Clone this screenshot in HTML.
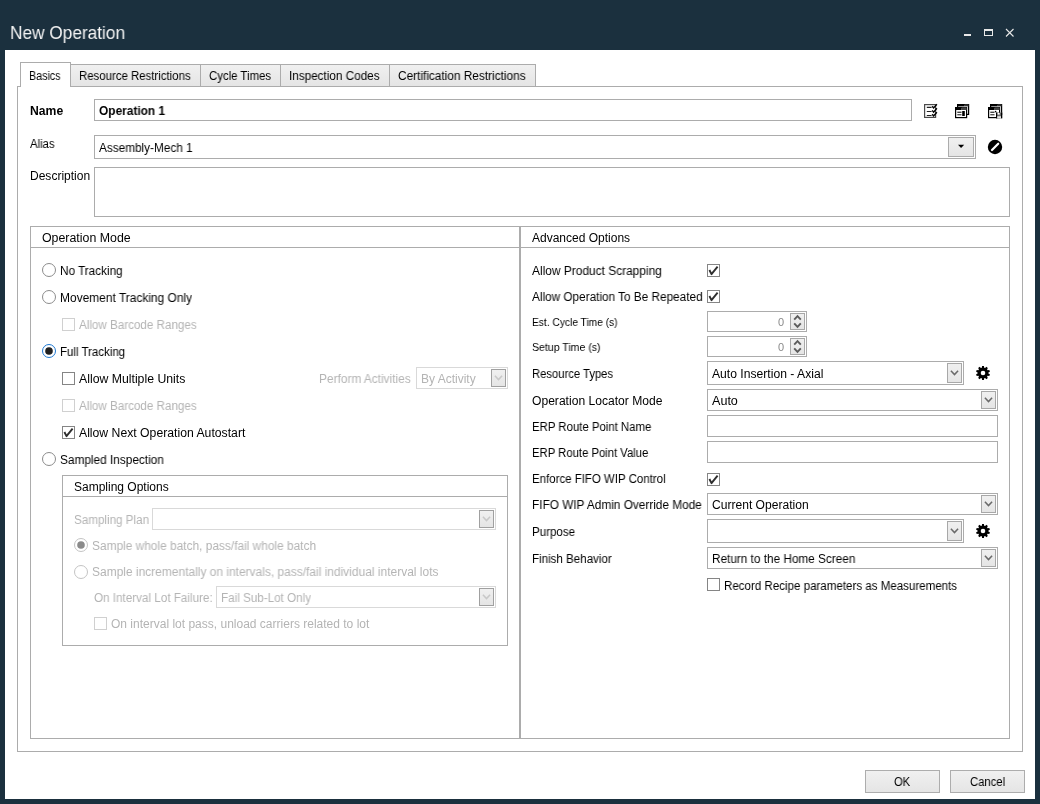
<!DOCTYPE html>
<html><head><meta charset="utf-8"><style>
html,body{margin:0;padding:0;width:1040px;height:804px;overflow:hidden;background:#1b303e;}
.t{position:absolute;white-space:nowrap;line-height:20px;transform-origin:0 0;will-change:transform;font-family:"Liberation Sans",sans-serif;}
.b{position:absolute;}
svg.b{overflow:visible}
</style></head><body>
<div class="t" style="left:10.20px;top:23px;font-size:19px;color:#f4f4f4;transform:scaleX(0.9081);">New Operation</div>
<svg class="b" style="left:960px;top:25px" width="60" height="16" viewBox="960 25 60 16"><rect x="964" y="34" width="7" height="2" fill="#e8e8e8"/><rect x="984.5" y="29.5" width="8" height="6" fill="none" stroke="#e8e8e8" stroke-width="1"/><rect x="984" y="29" width="9" height="2" fill="#e8e8e8"/><path d="M1006 29 L1013.5 36.5 M1013.5 29 L1006 36.5" stroke="#e8e8e8" stroke-width="1.1"/></svg>
<div class="b" style="left:5px;top:50px;width:1030px;height:749px;background:#fff"></div>
<div class="b" style="left:17px;top:86px;width:1006px;height:666px;border:1px solid #acacac;box-sizing:border-box"></div>
<div class="b" style="left:70px;top:64px;width:131px;height:23px;border:1px solid #acacac;box-sizing:border-box;background:linear-gradient(#f0f0f0,#e5e5e5)"></div>
<div class="b" style="left:200px;top:64px;width:81px;height:23px;border:1px solid #acacac;box-sizing:border-box;background:linear-gradient(#f0f0f0,#e5e5e5)"></div>
<div class="b" style="left:280px;top:64px;width:110px;height:23px;border:1px solid #acacac;box-sizing:border-box;background:linear-gradient(#f0f0f0,#e5e5e5)"></div>
<div class="b" style="left:389px;top:64px;width:147px;height:23px;border:1px solid #acacac;box-sizing:border-box;background:linear-gradient(#f0f0f0,#e5e5e5)"></div>
<div class="b" style="left:20px;top:62px;width:51px;height:25px;border:1px solid #acacac;border-bottom:none;box-sizing:border-box;background:#fff"></div>
<div class="t" style="left:29.25px;top:66px;font-size:12px;color:#000;transform:scaleX(0.8933);">Basics</div>
<div class="t" style="left:79.25px;top:66px;font-size:12px;color:#000;transform:scaleX(0.9508);">Resource Restrictions</div>
<div class="t" style="left:208.75px;top:66px;font-size:12px;color:#000;transform:scaleX(0.9499);">Cycle Times</div>
<div class="t" style="left:289.25px;top:66px;font-size:12px;color:#000;transform:scaleX(0.9768);">Inspection Codes</div>
<div class="t" style="left:397.75px;top:66px;font-size:12px;color:#000;transform:scaleX(0.9863);">Certification Restrictions</div>
<div class="t" style="left:30.25px;top:101px;font-size:12px;color:#000;font-weight:bold;transform:scaleX(1.0146);">Name</div>
<div class="b" style="left:94px;top:99px;width:818px;height:22px;border:1px solid #acacac;box-sizing:border-box"></div>
<div class="t" style="left:99.05px;top:101px;font-size:12px;color:#000;font-weight:bold;transform:scaleX(0.9906);">Operation 1</div>
<svg class="b" style="left:920px;top:100px" width="90" height="22" viewBox="920 100 90 22"><rect x="924.6" y="104.6" width="11" height="12.8" fill="#fff" stroke="#4a4a4a" stroke-width="1.2"/><path d="M926.8 107.4 H931.6 M926.8 111.5 H931.6 M926.8 115.5 H931.6" stroke="#222" stroke-width="1.1"/><path d="M932.2 106.3 L933.6 108 L936.9 104.2 M932.2 110.4 L933.6 112.1 L936.9 108.3 M932.2 114.3 L933.6 116 L936.9 112.2" stroke="#000" stroke-width="1.4" fill="none"/><rect x="957.6" y="104.6" width="11" height="9.8" fill="#fff" stroke="#000" stroke-width="1.2"/><rect x="957.6" y="104.2" width="7" height="2.2" fill="#000"/><rect x="964.6" y="104.2" width="4" height="2.2" fill="#333"/><rect x="955.6" y="107.6" width="11" height="10" fill="#fff" stroke="#000" stroke-width="1.2"/><rect x="955.6" y="107.4" width="6" height="2.6" fill="#000"/><rect x="961.6" y="107.4" width="5" height="2.6" fill="#444"/><rect x="957.3" y="111.6" width="4.2" height="1.4" fill="#444"/><rect x="957.3" y="114" width="4.2" height="1.4" fill="#555"/><rect x="962.2" y="111" width="2.6" height="5" fill="#000"/><rect x="990.6" y="104.6" width="11" height="9.8" fill="#fff" stroke="#000" stroke-width="1.2"/><rect x="990.6" y="104.2" width="7" height="2.2" fill="#000"/><rect x="997.6" y="104.2" width="4" height="2.2" fill="#333"/><rect x="988.6" y="107.6" width="11" height="10" fill="#fff" stroke="#000" stroke-width="1.2"/><rect x="988.6" y="107.4" width="6" height="2.6" fill="#000"/><rect x="994.6" y="107.4" width="5" height="2.6" fill="#444"/><rect x="990.3" y="111.6" width="4.2" height="1.4" fill="#444"/><rect x="990.3" y="114" width="4.2" height="1.4" fill="#555"/><rect x="996" y="112.5" width="6.2" height="5.8" fill="#6a6a6a"/><rect x="996" y="112.5" width="1.2" height="5.8" fill="#000"/><rect x="1001" y="112.5" width="1.2" height="5.8" fill="#000"/><rect x="997.6" y="113" width="2" height="1.6" fill="#fff"/><rect x="997.2" y="116.2" width="3.8" height="2" fill="#e0e0e0"/><circle cx="995.6" cy="111.6" r="0.8" fill="#000"/></svg>
<div class="t" style="left:29.75px;top:134px;font-size:12px;color:#000;transform:scaleX(0.9462);">Alias</div>
<div class="b" style="left:94px;top:135px;width:882px;height:24px;border:1px solid #acacac;box-sizing:border-box"></div>
<div class="b" style="left:948px;top:137px;width:26px;height:20px;border:1px solid #acacac;box-sizing:border-box;background:linear-gradient(#f0f0f0,#e5e5e5)"></div>
<svg class="b" style="left:955px;top:142px" width="12" height="8" viewBox="955 142 12 8"><path d="M958 144.8 H964.2 L961.1 147.9 Z" fill="#000"/></svg>
<div class="t" style="left:98.95px;top:138px;font-size:12px;color:#000;transform:scaleX(0.9814);">Assembly-Mech 1</div>
<svg class="b" style="left:985px;top:137px" width="20" height="20" viewBox="985 137 20 20"><circle cx="995" cy="147" r="7.2" fill="#000"/><path d="M992 150 L998.2 143.7" stroke="#fff" stroke-width="2.2" stroke-linecap="round"/></svg>
<div class="t" style="left:29.75px;top:166px;font-size:12px;color:#000;transform:scaleX(1.0017);">Description</div>
<div class="b" style="left:94px;top:167px;width:916px;height:50px;border:1px solid #acacac;box-sizing:border-box"></div>
<div class="b" style="left:30px;top:226px;width:490px;height:513px;border:1px solid #acacac;box-sizing:border-box"></div>
<div class="b" style="left:520px;top:226px;width:490px;height:513px;border:1px solid #acacac;box-sizing:border-box"></div>
<div class="b" style="left:30px;top:247px;width:980px;height:1px;background:#acacac"></div>
<div class="t" style="left:41.65px;top:228px;font-size:12px;color:#000;transform:scaleX(1.0302);">Operation Mode</div>
<div class="t" style="left:532.05px;top:228px;font-size:12px;color:#000;transform:scaleX(0.9997);">Advanced Options</div>
<svg class="b" style="left:42px;top:263px" width="14" height="14" viewBox="0 0 14 14"><circle cx="7" cy="7" r="6.5" fill="#fff" stroke="#8c8c8c" stroke-width="1"/></svg>
<div class="t" style="left:59.75px;top:261px;font-size:12px;color:#000;transform:scaleX(0.9781);">No Tracking</div>
<svg class="b" style="left:42px;top:290px" width="14" height="14" viewBox="0 0 14 14"><circle cx="7" cy="7" r="6.5" fill="#fff" stroke="#8c8c8c" stroke-width="1"/></svg>
<div class="t" style="left:59.75px;top:288px;font-size:12px;color:#000;transform:scaleX(0.9951);">Movement Tracking Only</div>
<svg class="b" style="left:62px;top:318px" width="13" height="13" viewBox="0 0 13 13"><rect x="0.5" y="0.5" width="12" height="12" fill="#fff" stroke="#d0d0d0" stroke-width="1"/></svg>
<div class="t" style="left:78.55px;top:315px;font-size:12px;color:#b4b4b4;transform:scaleX(0.9689);">Allow Barcode Ranges</div>
<svg class="b" style="left:42px;top:344px" width="14" height="14" viewBox="0 0 14 14"><circle cx="7" cy="7" r="6.5" fill="#fff" stroke="#1e78d2" stroke-width="1"/><circle cx="7" cy="7" r="3.8" fill="#212121"/></svg>
<div class="t" style="left:59.75px;top:342px;font-size:12px;color:#000;transform:scaleX(0.9574);">Full Tracking</div>
<svg class="b" style="left:62px;top:372px" width="13" height="13" viewBox="0 0 13 13"><rect x="0.5" y="0.5" width="12" height="12" fill="#fff" stroke="#858585" stroke-width="1"/></svg>
<div class="t" style="left:78.55px;top:369px;font-size:12px;color:#000;transform:scaleX(1.0221);">Allow Multiple Units</div>
<div class="t" style="left:318.75px;top:369px;font-size:12px;color:#b4b4b4;transform:scaleX(0.9898);">Perform Activities</div>
<div class="b" style="left:416px;top:367px;width:92px;height:22px;border:1px solid #d9d9d9;box-sizing:border-box;background:#fff"></div>
<div class="b" style="left:491px;top:369px;width:15px;height:18px;border:1px solid #a0a0a0;box-sizing:border-box;background:linear-gradient(#f0f0f0,#e5e5e5)"></div>
<svg class="b" style="left:491px;top:369px" width="15" height="18" viewBox="491 369 15 18"><path d="M494.9 375.8 L498.5 379.6 L502.1 375.8" stroke="#c8c8c8" stroke-width="1.5" fill="none"/></svg>
<div class="t" style="left:420.75px;top:369px;font-size:12px;color:#b4b4b4;transform:scaleX(0.9995);">By Activity</div>
<svg class="b" style="left:62px;top:399px" width="13" height="13" viewBox="0 0 13 13"><rect x="0.5" y="0.5" width="12" height="12" fill="#fff" stroke="#d0d0d0" stroke-width="1"/></svg>
<div class="t" style="left:78.55px;top:396px;font-size:12px;color:#b4b4b4;transform:scaleX(0.9689);">Allow Barcode Ranges</div>
<svg class="b" style="left:62px;top:426px" width="13" height="13" viewBox="0 0 13 13"><rect x="0.5" y="0.5" width="12" height="12" fill="#fff" stroke="#858585" stroke-width="1"/><path d="M2.4 6.0 L4.5 10.2 L10.6 2.7" stroke="#2e2e2e" stroke-width="1.9" fill="none" stroke-linejoin="round"/></svg>
<div class="t" style="left:78.55px;top:423px;font-size:12px;color:#000;transform:scaleX(1.0179);">Allow Next Operation Autostart</div>
<svg class="b" style="left:42px;top:452px" width="14" height="14" viewBox="0 0 14 14"><circle cx="7" cy="7" r="6.5" fill="#fff" stroke="#8c8c8c" stroke-width="1"/></svg>
<div class="t" style="left:59.75px;top:450px;font-size:12px;color:#000;transform:scaleX(0.9851);">Sampled Inspection</div>
<div class="b" style="left:62px;top:475px;width:446px;height:171px;border:1px solid #acacac;box-sizing:border-box"></div>
<div class="b" style="left:62px;top:496px;width:446px;height:1px;background:#acacac"></div>
<div class="t" style="left:73.55px;top:477px;font-size:12px;color:#000;transform:scaleX(0.9984);">Sampling Options</div>
<div class="t" style="left:73.55px;top:510px;font-size:12px;color:#b4b4b4;transform:scaleX(0.9706);">Sampling Plan</div>
<div class="b" style="left:152px;top:508px;width:344px;height:22px;border:1px solid #d9d9d9;box-sizing:border-box;background:#fff"></div>
<div class="b" style="left:479px;top:510px;width:15px;height:18px;border:1px solid #a0a0a0;box-sizing:border-box;background:linear-gradient(#f0f0f0,#e5e5e5)"></div>
<svg class="b" style="left:479px;top:510px" width="15" height="18" viewBox="479 510 15 18"><path d="M482.9 516.8 L486.5 520.6 L490.1 516.8" stroke="#c8c8c8" stroke-width="1.5" fill="none"/></svg>
<svg class="b" style="left:74px;top:538px" width="14" height="14" viewBox="0 0 14 14"><circle cx="7" cy="7" r="6.5" fill="#fff" stroke="#c4c4c4" stroke-width="1"/><circle cx="7" cy="7" r="3.8" fill="#8a8a8a"/></svg>
<div class="t" style="left:91.75px;top:536px;font-size:12px;color:#b4b4b4;transform:scaleX(0.9910);">Sample whole batch, pass/fail whole batch</div>
<svg class="b" style="left:74px;top:565px" width="14" height="14" viewBox="0 0 14 14"><circle cx="7" cy="7" r="6.5" fill="#fff" stroke="#c4c4c4" stroke-width="1"/></svg>
<div class="t" style="left:91.75px;top:562px;font-size:12px;color:#b4b4b4;transform:scaleX(0.9968);">Sample incrementally on intervals, pass/fail individual interval lots</div>
<div class="t" style="left:93.75px;top:588px;font-size:12px;color:#b4b4b4;transform:scaleX(0.9721);">On Interval Lot Failure:</div>
<div class="b" style="left:216px;top:586px;width:280px;height:22px;border:1px solid #d9d9d9;box-sizing:border-box;background:#fff"></div>
<div class="b" style="left:479px;top:588px;width:15px;height:18px;border:1px solid #a0a0a0;box-sizing:border-box;background:linear-gradient(#f0f0f0,#e5e5e5)"></div>
<svg class="b" style="left:479px;top:588px" width="15" height="18" viewBox="479 588 15 18"><path d="M482.9 594.8 L486.5 598.6 L490.1 594.8" stroke="#c8c8c8" stroke-width="1.5" fill="none"/></svg>
<div class="t" style="left:220.75px;top:588px;font-size:12px;color:#b4b4b4;transform:scaleX(0.9714);">Fail Sub-Lot Only</div>
<svg class="b" style="left:94px;top:617px" width="13" height="13" viewBox="0 0 13 13"><rect x="0.5" y="0.5" width="12" height="12" fill="#fff" stroke="#d0d0d0" stroke-width="1"/></svg>
<div class="t" style="left:110.55px;top:614px;font-size:12px;color:#b4b4b4;transform:scaleX(1.0007);">On interval lot pass, unload carriers related to lot</div>
<div class="t" style="left:531.75px;top:261px;font-size:12px;color:#000;transform:scaleX(0.9935);">Allow Product Scrapping</div>
<svg class="b" style="left:707px;top:264px" width="13" height="13" viewBox="0 0 13 13"><rect x="0.5" y="0.5" width="12" height="12" fill="#fff" stroke="#858585" stroke-width="1"/><path d="M2.4 6.0 L4.5 10.2 L10.6 2.7" stroke="#2e2e2e" stroke-width="1.9" fill="none" stroke-linejoin="round"/></svg>
<div class="t" style="left:531.75px;top:287px;font-size:12px;color:#000;transform:scaleX(0.9812);">Allow Operation To Be Repeated</div>
<svg class="b" style="left:707px;top:290px" width="13" height="13" viewBox="0 0 13 13"><rect x="0.5" y="0.5" width="12" height="12" fill="#fff" stroke="#858585" stroke-width="1"/><path d="M2.4 6.0 L4.5 10.2 L10.6 2.7" stroke="#2e2e2e" stroke-width="1.9" fill="none" stroke-linejoin="round"/></svg>
<div class="t" style="left:531.75px;top:312px;font-size:11px;color:#000;transform:scaleX(0.9279);">Est. Cycle Time (s)</div>
<div class="t" style="left:531.75px;top:337px;font-size:11px;color:#000;transform:scaleX(0.9594);">Setup Time (s)</div>
<div class="b" style="left:707px;top:311px;width:100px;height:21px;border:1px solid #acacac;box-sizing:border-box;background:#fff"></div>
<div class="b" style="left:790px;top:313px;width:15px;height:17px;border:1px solid #a8a8a8;box-sizing:border-box;background:linear-gradient(#f0f0f0,#e5e5e5)"></div>
<svg class="b" style="left:790px;top:313px" width="15" height="17" viewBox="0 0 15 17"><path d="M4.2 6.6 L7.5 3.1 L10.8 6.6 M4.2 10.3 L7.5 13.9 L10.8 10.3" stroke="#5c5c5c" stroke-width="1.9" fill="none"/></svg>
<div class="t" style="left:778.30px;top:312px;font-size:11px;color:#8a8a8a;">0</div>
<div class="b" style="left:707px;top:336px;width:100px;height:21px;border:1px solid #acacac;box-sizing:border-box;background:#fff"></div>
<div class="b" style="left:790px;top:338px;width:15px;height:17px;border:1px solid #a8a8a8;box-sizing:border-box;background:linear-gradient(#f0f0f0,#e5e5e5)"></div>
<svg class="b" style="left:790px;top:338px" width="15" height="17" viewBox="0 0 15 17"><path d="M4.2 6.6 L7.5 3.1 L10.8 6.6 M4.2 10.3 L7.5 13.9 L10.8 10.3" stroke="#5c5c5c" stroke-width="1.9" fill="none"/></svg>
<div class="t" style="left:778.30px;top:337px;font-size:11px;color:#8a8a8a;">0</div>
<div class="t" style="left:531.95px;top:364px;font-size:12px;color:#000;transform:scaleX(0.9364);">Resource Types</div>
<div class="b" style="left:707px;top:361px;width:257px;height:24px;border:1px solid #acacac;box-sizing:border-box;background:#fff"></div>
<div class="b" style="left:947px;top:363px;width:15px;height:20px;border:1px solid #a8a8a8;box-sizing:border-box;background:linear-gradient(#f0f0f0,#e5e5e5)"></div>
<svg class="b" style="left:947px;top:363px" width="15" height="20" viewBox="947 363 15 20"><path d="M950.9 370.8 L954.5 374.6 L958.1 370.8" stroke="#6a6a6a" stroke-width="1.5" fill="none"/></svg>
<div class="t" style="left:711.55px;top:364px;font-size:12px;color:#000;transform:scaleX(1.0118);">Auto Insertion - Axial</div>
<svg class="b" style="left:974px;top:364px" width="18" height="18" viewBox="974 364 18 18"><path d="M981.81 367.73 L982.09 366.06 L983.91 366.06 L984.19 367.73 L985.13 368.04 L986.34 366.85 L987.82 367.92 L987.06 369.44 L987.64 370.24 L989.32 369.99 L989.88 371.72 L988.38 372.51 L988.38 373.49 L989.88 374.28 L989.32 376.01 L987.64 375.76 L987.06 376.56 L987.82 378.08 L986.34 379.15 L985.13 377.96 L984.19 378.27 L983.91 379.94 L982.09 379.94 L981.81 378.27 L980.87 377.96 L979.66 379.15 L978.18 378.08 L978.94 376.56 L978.36 375.76 L976.68 376.01 L976.12 374.28 L977.62 373.49 L977.62 372.51 L976.12 371.72 L976.68 369.99 L978.36 370.24 L978.94 369.44 L978.18 367.92 L979.66 366.85 L980.87 368.04 Z M985.3 373 A2.3 2.3 0 1 0 980.7 373 A2.3 2.3 0 1 0 985.3 373 Z" fill="#000" fill-rule="evenodd"/></svg>
<div class="t" style="left:531.95px;top:391px;font-size:12px;color:#000;transform:scaleX(1.0079);">Operation Locator Mode</div>
<div class="b" style="left:707px;top:389px;width:291px;height:22px;border:1px solid #acacac;box-sizing:border-box;background:#fff"></div>
<div class="b" style="left:981px;top:391px;width:15px;height:18px;border:1px solid #a8a8a8;box-sizing:border-box;background:linear-gradient(#f0f0f0,#e5e5e5)"></div>
<svg class="b" style="left:981px;top:391px" width="15" height="18" viewBox="981 391 15 18"><path d="M984.9 397.8 L988.5 401.6 L992.1 397.8" stroke="#6a6a6a" stroke-width="1.5" fill="none"/></svg>
<div class="t" style="left:711.55px;top:391px;font-size:12px;color:#000;transform:scaleX(1.0477);">Auto</div>
<div class="t" style="left:531.75px;top:417px;font-size:12px;color:#000;transform:scaleX(0.9478);">ERP Route Point Name</div>
<div class="b" style="left:707px;top:415px;width:291px;height:22px;border:1px solid #acacac;box-sizing:border-box;background:#fff"></div>
<div class="t" style="left:531.75px;top:443px;font-size:12px;color:#000;transform:scaleX(0.9407);">ERP Route Point Value</div>
<div class="b" style="left:707px;top:441px;width:291px;height:22px;border:1px solid #acacac;box-sizing:border-box;background:#fff"></div>
<div class="t" style="left:531.75px;top:469px;font-size:12px;color:#000;transform:scaleX(0.9551);">Enforce FIFO WIP Control</div>
<svg class="b" style="left:707px;top:473px" width="13" height="13" viewBox="0 0 13 13"><rect x="0.5" y="0.5" width="12" height="12" fill="#fff" stroke="#858585" stroke-width="1"/><path d="M2.4 6.0 L4.5 10.2 L10.6 2.7" stroke="#2e2e2e" stroke-width="1.9" fill="none" stroke-linejoin="round"/></svg>
<div class="t" style="left:531.75px;top:495px;font-size:12px;color:#000;transform:scaleX(0.9843);">FIFO WIP Admin Override Mode</div>
<div class="b" style="left:707px;top:493px;width:291px;height:22px;border:1px solid #acacac;box-sizing:border-box;background:#fff"></div>
<div class="b" style="left:981px;top:495px;width:15px;height:18px;border:1px solid #a8a8a8;box-sizing:border-box;background:linear-gradient(#f0f0f0,#e5e5e5)"></div>
<svg class="b" style="left:981px;top:495px" width="15" height="18" viewBox="981 495 15 18"><path d="M984.9 501.8 L988.5 505.6 L992.1 501.8" stroke="#6a6a6a" stroke-width="1.5" fill="none"/></svg>
<div class="t" style="left:711.55px;top:495px;font-size:12px;color:#000;transform:scaleX(1.0062);">Current Operation</div>
<div class="t" style="left:531.75px;top:522px;font-size:12px;color:#000;transform:scaleX(0.9631);">Purpose</div>
<div class="b" style="left:707px;top:519px;width:257px;height:24px;border:1px solid #acacac;box-sizing:border-box;background:#fff"></div>
<div class="b" style="left:947px;top:521px;width:15px;height:20px;border:1px solid #a8a8a8;box-sizing:border-box;background:linear-gradient(#f0f0f0,#e5e5e5)"></div>
<svg class="b" style="left:947px;top:521px" width="15" height="20" viewBox="947 521 15 20"><path d="M950.9 528.8 L954.5 532.6 L958.1 528.8" stroke="#6a6a6a" stroke-width="1.5" fill="none"/></svg>
<svg class="b" style="left:974px;top:522px" width="18" height="18" viewBox="974 522 18 18"><path d="M981.81 525.73 L982.09 524.06 L983.91 524.06 L984.19 525.73 L985.13 526.04 L986.34 524.85 L987.82 525.92 L987.06 527.44 L987.64 528.24 L989.32 527.99 L989.88 529.72 L988.38 530.51 L988.38 531.49 L989.88 532.28 L989.32 534.01 L987.64 533.76 L987.06 534.56 L987.82 536.08 L986.34 537.15 L985.13 535.96 L984.19 536.27 L983.91 537.94 L982.09 537.94 L981.81 536.27 L980.87 535.96 L979.66 537.15 L978.18 536.08 L978.94 534.56 L978.36 533.76 L976.68 534.01 L976.12 532.28 L977.62 531.49 L977.62 530.51 L976.12 529.72 L976.68 527.99 L978.36 528.24 L978.94 527.44 L978.18 525.92 L979.66 524.85 L980.87 526.04 Z M985.3 531 A2.3 2.3 0 1 0 980.7 531 A2.3 2.3 0 1 0 985.3 531 Z" fill="#000" fill-rule="evenodd"/></svg>
<div class="t" style="left:531.75px;top:549px;font-size:12px;color:#000;transform:scaleX(0.9644);">Finish Behavior</div>
<div class="b" style="left:707px;top:547px;width:291px;height:22px;border:1px solid #acacac;box-sizing:border-box;background:#fff"></div>
<div class="b" style="left:981px;top:549px;width:15px;height:18px;border:1px solid #a8a8a8;box-sizing:border-box;background:linear-gradient(#f0f0f0,#e5e5e5)"></div>
<svg class="b" style="left:981px;top:549px" width="15" height="18" viewBox="981 549 15 18"><path d="M984.9 555.8 L988.5 559.6 L992.1 555.8" stroke="#6a6a6a" stroke-width="1.5" fill="none"/></svg>
<div class="t" style="left:711.75px;top:549px;font-size:12px;color:#000;transform:scaleX(0.9814);">Return to the Home Screen</div>
<svg class="b" style="left:707px;top:578px" width="13" height="13" viewBox="0 0 13 13"><rect x="0.5" y="0.5" width="12" height="12" fill="#fff" stroke="#858585" stroke-width="1"/></svg>
<div class="t" style="left:724.25px;top:576px;font-size:12px;color:#000;transform:scaleX(0.9627);">Record Recipe parameters as Measurements</div>
<div class="b" style="left:865px;top:770px;width:75px;height:23px;border:1px solid #adadad;box-sizing:border-box;background:linear-gradient(#f0f0f0,#e5e5e5)"></div>
<div class="t" style="left:893.75px;top:772px;font-size:12px;color:#000;transform:scaleX(0.9381);">OK</div>
<div class="b" style="left:950px;top:770px;width:75px;height:23px;border:1px solid #adadad;box-sizing:border-box;background:linear-gradient(#f0f0f0,#e5e5e5)"></div>
<div class="t" style="left:969.55px;top:772px;font-size:12px;color:#000;transform:scaleX(0.9391);">Cancel</div>
</body></html>
